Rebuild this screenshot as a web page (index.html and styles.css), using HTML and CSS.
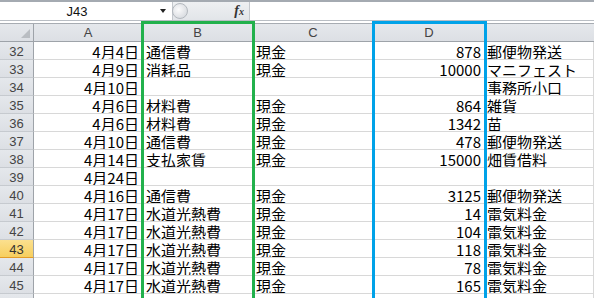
FILE: index.html
```html
<!DOCTYPE html>
<html lang="ja">
<head>
    <meta charset="UTF-8">
    <meta name="viewport" content="width=device-width, initial-scale=1.0">
    <title>経費一覧</title>
    <link rel="stylesheet" href="styles.css">
</head>
<body>
    <div class="top-strip"></div>

    <div class="formula-bar">
        <div class="name-box">
            <span class="name-text">J43</span>
            <span class="name-arrow"></span>
        </div>
        <div class="fx-panel">
            <span class="grip"></span>
            <span class="fx">f<span class="fx-x">x</span></span>
        </div>
        <div class="formula-input"></div>
    </div>

    <div class="sheet">
        <div class="sheet-gap"></div>

        <div class="grid">
            <div class="corner"><span class="corner-tri"></span></div>
            <div class="col-head">A</div>
            <div class="col-head">B</div>
            <div class="col-head">C</div>
            <div class="col-head">D</div>
            <div class="col-head last"></div>

            <div class="row-head">32</div>
            <div class="cell num">4月4日</div>
            <div class="cell">通信費</div>
            <div class="cell">現金</div>
            <div class="cell num">878</div>
            <div class="cell">郵便物発送</div>

            <div class="row-head">33</div>
            <div class="cell num">4月9日</div>
            <div class="cell">消耗品</div>
            <div class="cell">現金</div>
            <div class="cell num">10000</div>
            <div class="cell">マニフェスト</div>

            <div class="row-head">34</div>
            <div class="cell num">4月10日</div>
            <div class="cell"></div>
            <div class="cell"></div>
            <div class="cell num"></div>
            <div class="cell">事務所小口</div>

            <div class="row-head">35</div>
            <div class="cell num">4月6日</div>
            <div class="cell">材料費</div>
            <div class="cell">現金</div>
            <div class="cell num">864</div>
            <div class="cell">雑貨</div>

            <div class="row-head">36</div>
            <div class="cell num">4月6日</div>
            <div class="cell">材料費</div>
            <div class="cell">現金</div>
            <div class="cell num">1342</div>
            <div class="cell">苗</div>

            <div class="row-head">37</div>
            <div class="cell num">4月10日</div>
            <div class="cell">通信費</div>
            <div class="cell">現金</div>
            <div class="cell num">478</div>
            <div class="cell">郵便物発送</div>

            <div class="row-head">38</div>
            <div class="cell num">4月14日</div>
            <div class="cell">支払家賃</div>
            <div class="cell">現金</div>
            <div class="cell num">15000</div>
            <div class="cell">畑賃借料</div>

            <div class="row-head">39</div>
            <div class="cell num">4月24日</div>
            <div class="cell"></div>
            <div class="cell"></div>
            <div class="cell num"></div>
            <div class="cell"></div>

            <div class="row-head">40</div>
            <div class="cell num">4月16日</div>
            <div class="cell">通信費</div>
            <div class="cell">現金</div>
            <div class="cell num">3125</div>
            <div class="cell">郵便物発送</div>

            <div class="row-head">41</div>
            <div class="cell num">4月17日</div>
            <div class="cell">水道光熱費</div>
            <div class="cell">現金</div>
            <div class="cell num">14</div>
            <div class="cell">電気料金</div>

            <div class="row-head">42</div>
            <div class="cell num">4月17日</div>
            <div class="cell">水道光熱費</div>
            <div class="cell">現金</div>
            <div class="cell num">104</div>
            <div class="cell">電気料金</div>

            <div class="row-head active">43</div>
            <div class="cell num">4月17日</div>
            <div class="cell">水道光熱費</div>
            <div class="cell">現金</div>
            <div class="cell num">118</div>
            <div class="cell">電気料金</div>

            <div class="row-head">44</div>
            <div class="cell num">4月17日</div>
            <div class="cell">水道光熱費</div>
            <div class="cell">現金</div>
            <div class="cell num">78</div>
            <div class="cell">電気料金</div>

            <div class="row-head">45</div>
            <div class="cell num">4月17日</div>
            <div class="cell">水道光熱費</div>
            <div class="cell">現金</div>
            <div class="cell num">165</div>
            <div class="cell">電気料金</div>

            <div class="row-head">46</div>
            <div class="cell"></div>
            <div class="cell"></div>
            <div class="cell"></div>
            <div class="cell"></div>
            <div class="cell"></div>
        </div>

        <!-- highlight boxes drawn over columns B and D -->
        <div class="mark mark-green"></div>
        <div class="mark mark-blue"></div>
    </div>
</body>
</html>
```

FILE: styles.css
```css
body {
    margin: 0;
    width: 594px;
    height: 298px;
    overflow: hidden;
    background: #fff;
    font-family: "Noto Sans CJK JP", "Liberation Sans", sans-serif;
    color: #000;
}

.top-strip {
    height: 2px;
    background: #a4aab1;
}

.formula-bar {
    display: flex;
    height: 18px;
    background: #fff;
}

.name-box {
    display: flex;
    align-items: center;
    width: 172px;
}

.name-text {
    width: 154px;
    text-align: center;
    font-family: "Liberation Sans", sans-serif;
    font-size: 13px;
    color: #111;
}

.name-arrow {
    width: 0;
    height: 0;
    margin-left: 6px;
    border-left: 3px solid transparent;
    border-right: 3px solid transparent;
    border-top: 4px solid #222;
}

.fx-panel {
    display: flex;
    align-items: center;
    justify-content: space-between;
    width: 78px;
    padding-right: 5px;
    box-sizing: border-box;
    background: linear-gradient(#eef0f2, #e2e5e9);
    border-left: 1px solid #c4c8cd;
    border-right: 1px solid #c4c8cd;
}

.grip {
    width: 16px;
    height: 16px;
    margin-left: -1px;
    border-radius: 50%;
    border: 1px solid #b3b8be;
    background: radial-gradient(circle at 40% 40%, #fbfbfc, #cfd3d8);
    box-sizing: border-box;
}

.fx {
    font-family: "Liberation Serif", serif;
    font-style: italic;
    font-weight: bold;
    font-size: 14px;
    color: #333;
}

.fx-x {
    font-size: 10px;
}

.formula-input {
    flex: 1;
    background: #fff;
}

.sheet {
    position: relative;
}

.sheet-gap {
    height: 2px;
    border-top: 1px solid #b9bec4;
    border-bottom: 1px solid #a7acb2;
}

.grid {
    display: grid;
    grid-template-columns: 34px 109px 110px 121px 111px 1fr;
    grid-auto-rows: 18px;
}

.corner,
.col-head,
.row-head {
    box-sizing: border-box;
    background: linear-gradient(#e5e8ec, #dcdfe4);
    color: #444;
    font-family: "Liberation Sans", sans-serif;
    font-size: 13px;
}

.corner {
    position: relative;
    border-right: 1px solid #9ea3a9;
    border-bottom: 1px solid #9ea3a9;
}

.corner-tri {
    position: absolute;
    right: 3px;
    bottom: 3px;
    width: 0;
    height: 0;
    border-left: 9px solid transparent;
    border-bottom: 9px solid #b9bdc2;
}

.col-head {
    display: flex;
    align-items: center;
    justify-content: center;
    border-right: 1px solid #c2c6cb;
    border-bottom: 1px solid #9ea3a9;
    font-weight: 300;
}

.col-head.last {
    border-right: none;
}

.row-head {
    display: flex;
    align-items: center;
    justify-content: center;
    border-right: 1px solid #9ea3a9;
    border-bottom: 1px solid #c6cacf;
    padding-top: 1px;
}

.row-head.active {
    background: linear-gradient(#fbe08f, #f7cf5e);
    border-bottom: 1px solid #e39c27;
    color: #333;
}

.cell {
    box-sizing: border-box;
    border-right: 1px solid #d8d8d8;
    border-bottom: 1px solid #d8d8d8;
    padding: 1px 3px 0;
    font-size: 15px;
    line-height: 17px;
    white-space: nowrap;
    overflow: hidden;
}

.cell:nth-child(6n) {
    padding-left: 2px;
}

.cell.num {
    text-align: right;
}

.mark {
    position: absolute;
    top: 1px;
    height: 320px;
    border: 3px solid;
    box-sizing: border-box;
}

.mark-green {
    left: 141px;
    width: 114px;
    border-color: #22b14c;
}

.mark-blue {
    left: 372px;
    width: 115px;
    border-color: #00a2e8;
}
```
